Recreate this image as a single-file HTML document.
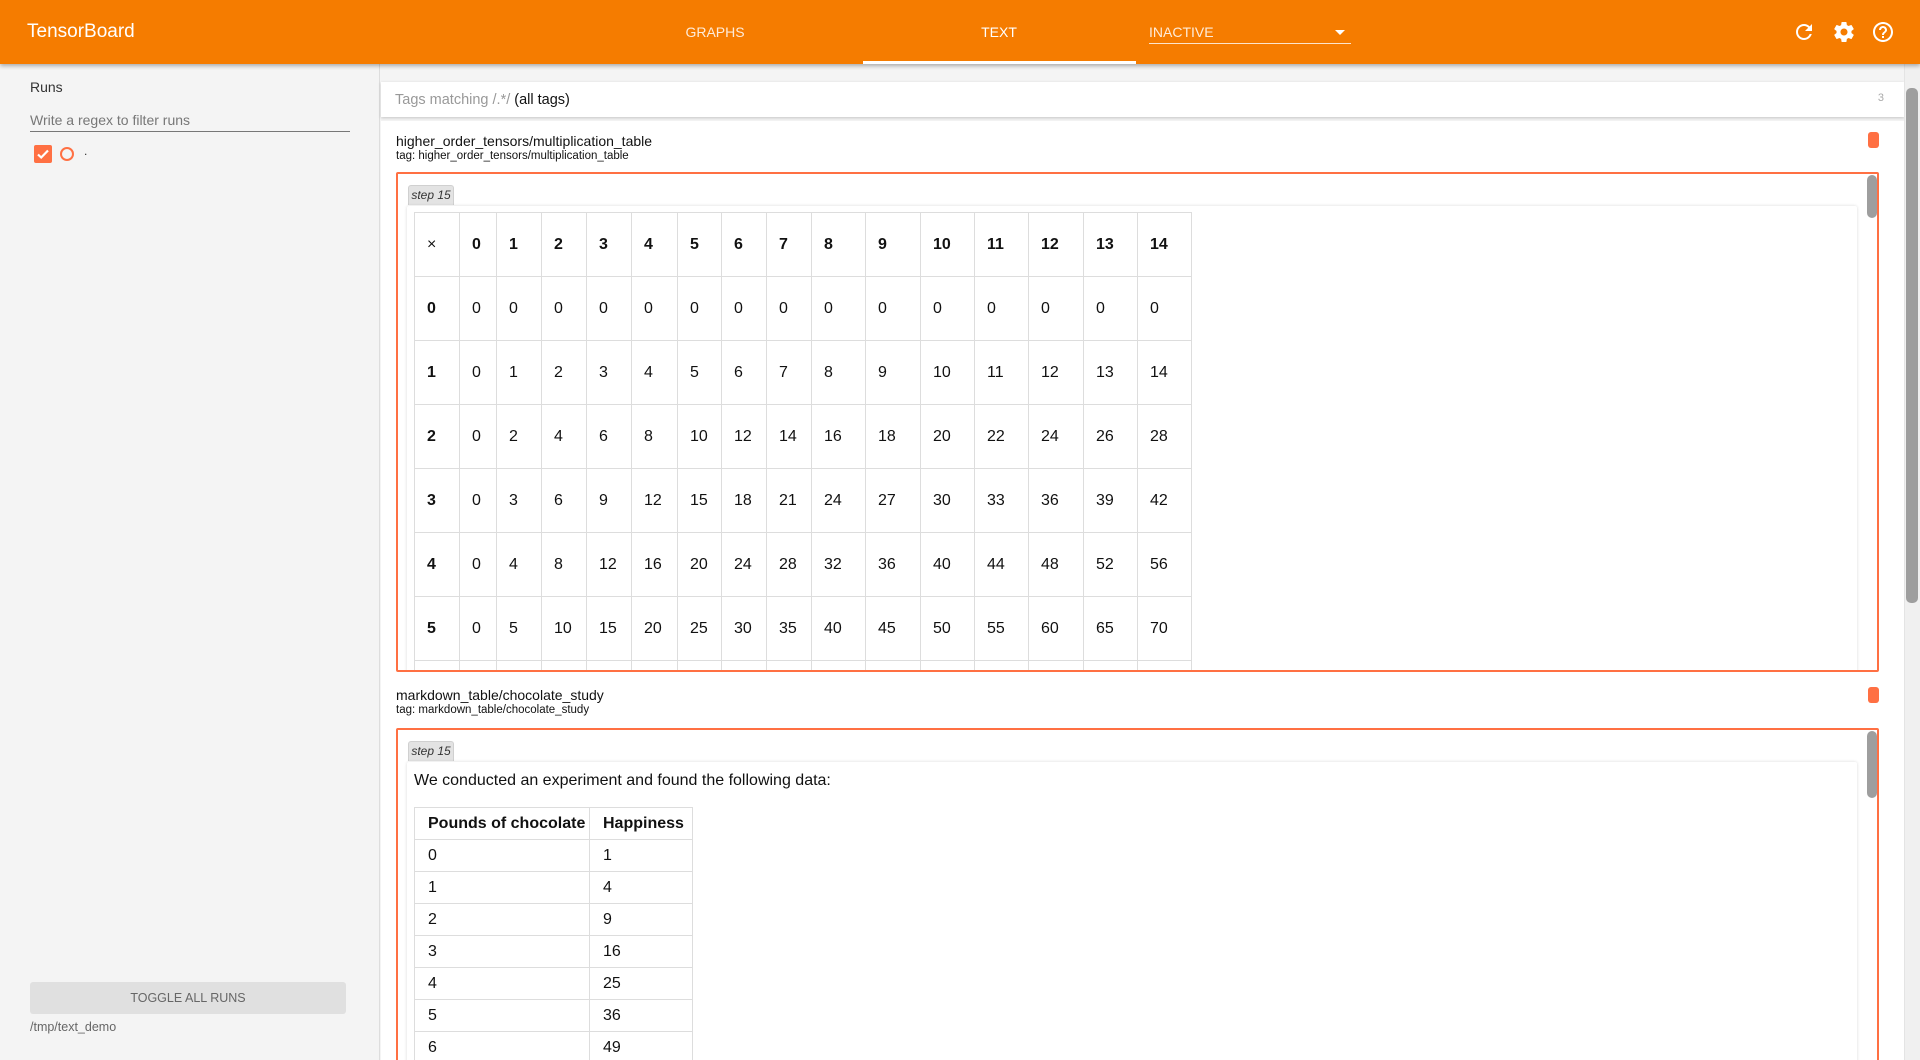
<!DOCTYPE html>
<html style="overflow:hidden;height:1060px"><head><meta charset="utf-8">
<style>
*{box-sizing:border-box;margin:0;padding:0}
html,body{width:1920px;height:1060px;overflow:hidden}
body{background:#f4f4f4;font-family:"Liberation Sans",Arial,sans-serif;color:#212121}
#wrap{position:relative;width:1920px;height:1060px;overflow:hidden}
.abs{position:absolute}
#hdr{left:0;top:0;width:1920px;height:64px;background:#f57c00;box-shadow:0 2px 4px rgba(0,0,0,.3);z-index:5;color:#fff}
#hdr .t{position:absolute;top:32px;transform:translateY(-50%);white-space:nowrap}
.tab{font-size:14px;color:rgba(255,255,255,.85);transform:translate(-50%,-50%)!important}
#side{left:0;top:64px;width:380px;height:996px;background:#f4f4f4;border-right:1px solid #ddd}
.card{background:#fff}
.box{border:2px solid #ff7043;border-radius:2px;overflow:hidden}
.chip{background:#e3e3e3;border:1px solid #d0d0d0;border-bottom:none;border-radius:3px 3px 0 0;font-style:italic;font-size:12px;color:#333;text-align:center;line-height:18px}
.inner{background:#fff;box-shadow:0 0 3px rgba(0,0,0,.15);border-radius:2px;overflow:hidden}
table{border-collapse:collapse;table-layout:fixed}
td,th{border:1px solid #ddd;text-align:left;font-size:16px;color:#111}
#mt td{height:64px;padding:0 0 0 12px}
#mt tr:first-child td,#mt td:first-child{font-weight:bold}
#ct td{height:32px;padding:0 0 0 13px}
#ct tr:first-child td{font-weight:bold}
.ob{background:#ff7043;border-radius:3px;width:11px;height:16px}
.sb{background:#9e9e9e;border-radius:5px}
</style></head><body>
<div id="wrap">
<div id="hdr" class="abs">
  <div class="t" style="left:27px;font-size:19px">TensorBoard</div>
  <div class="t tab" style="left:715px">GRAPHS</div>
  <div class="t tab" style="left:999px;color:#fff">TEXT</div>
  <div class="abs" style="left:863px;top:61px;width:273px;height:3px;background:#fff"></div>
  <div class="t" style="left:1149px;font-size:14px;color:rgba(255,255,255,.85)">INACTIVE</div>
  <div class="abs" style="left:1335px;top:30px;width:0;height:0;border-left:5px solid transparent;border-right:5px solid transparent;border-top:5px solid #fff"></div>
  <div class="abs" style="left:1149px;top:43px;width:202px;height:1px;background:rgba(255,255,255,.8)"></div>
  <svg class="abs" style="left:1792px;top:20px" width="24" height="24" viewBox="0 0 24 24"><path fill="#fff" d="M17.65 6.35C16.2 4.9 14.21 4 12 4c-4.420 0-7.99 3.58-7.99 8s3.57 8 7.99 8c3.73 0 6.84-2.55 7.73-6h-2.08c-.82 2.33-3.04 4-5.65 4-3.31 0-6-2.69-6-6s2.69-6 6-6c1.66 0 3.14.69 4.22 1.78L13 11h7V4l-2.35 2.35z"/></svg>
  <svg class="abs" style="left:1832px;top:20px" width="24" height="24" viewBox="0 0 24 24"><path fill="#fff" d="M19.43 12.98c.04-.32.07-.64.07-.98s-.03-.66-.07-.98l2.11-1.65c.19-.15.24-.42.12-.64l-2-3.46c-.12-.22-.39-.3-.61-.22l-2.49 1c-.52-.4-1.08-.73-1.69-.98l-.38-2.65C14.46 2.18 14.25 2 14 2h-4c-.25 0-.46.18-.49.42l-.38 2.65c-.61.25-1.17.59-1.69.98l-2.49-1c-.23-.09-.49 0-.61.22l-2 3.46c-.13.22-.07.49.12.64l2.11 1.65c-.04.32-.07.65-.07.98s.03.66.07.98l-2.11 1.65c-.19.15-.24.42-.12.64l2 3.46c.12.22.39.3.61.22l2.49-1c.52.4 1.08.73 1.69.98l.38 2.65c.03.24.24.42.49.42h4c.25 0 .46-.18.49-.42l.38-2.65c.61-.25 1.17-.59 1.69-.98l2.49 1c.23.09.49 0 .61-.22l2-3.46c.12-.22.07-.49-.12-.64l-2.11-1.65zM12 15.5c-1.93 0-3.5-1.57-3.5-3.5s1.57-3.5 3.5-3.5 3.5 1.57 3.5 3.5-1.57 3.5-3.5 3.5z"/></svg>
  <svg class="abs" style="left:1871px;top:20px" width="24" height="24" viewBox="0 0 24 24"><path fill="#fff" d="M11 18h2v-2h-2v2zm1-16C6.48 2 2 6.48 2 12s4.48 10 10 10 10-4.48 10-10S17.52 2 12 2zm0 18c-4.41 0-8-3.59-8-8s3.59-8 8-8 8 3.59 8 8-3.59 8-8 8zm0-14c-2.21 0-4 1.79-4 4h2c0-1.1.9-2 2-2s2 .9 2 2c0 2-3 1.75-3 5h2c0-2.25 3-2.5 3-5 0-2.21-1.79-4-4-4z"/></svg>
</div>

<div id="side" class="abs">
  <div class="abs" style="left:30px;top:15px;font-size:14px;color:#333">Runs</div>
  <div class="abs" style="left:30px;top:48px;font-size:14px;color:#777">Write a regex to filter runs</div>
  <div class="abs" style="left:30px;top:67px;width:320px;height:1px;background:#777"></div>
  <div class="abs" style="left:34px;top:81px;width:18px;height:18px;background:#ff7043;border-radius:2px"></div>
  <svg class="abs" style="left:34px;top:81px" width="18" height="18" viewBox="0 0 18 18"><path d="M4 9.5l3.2 3L14 5.5" stroke="#fff" stroke-width="2.2" fill="none"/></svg>
  <div class="abs" style="left:60px;top:83px;width:14px;height:14px;border:2px solid #ff7043;border-radius:50%"></div>
  <div class="abs" style="left:84px;top:80px;font-size:12px;color:#333">.</div>
  <div class="abs" style="left:30px;top:918px;width:316px;height:32px;background:#e0e0e0;border-radius:3px;font-size:12.5px;color:#666;text-align:center;line-height:32px">TOGGLE ALL RUNS</div>
  <div class="abs" style="left:30px;top:956px;font-size:12.5px;color:#666">/tmp/text_demo</div>
</div>

<div class="abs card" style="left:381px;top:82px;width:1523px;height:35px;box-shadow:0 1px 3px rgba(0,0,0,.2)">
  <div class="abs" style="left:14px;top:10px;font-size:14.5px;color:#999">Tags matching /.*/ <span style="color:#111">(all tags)</span></div>
  <div class="abs" style="right:20px;top:10px;font-size:11px;color:#aaa">3</div>
</div>

<div class="abs card" style="left:381px;top:121px;width:1523px;height:939px"></div>
<div class="abs" style="left:1904px;top:64px;width:16px;height:996px;background:#f0f0f0;border-left:1px solid #e4e4e4"></div>
<div class="abs sb" style="left:1906px;top:88px;width:12px;height:515px"></div>

<!-- card 1 -->
<div class="abs" style="left:396px;top:133px;font-size:14px;color:#111">higher_order_tensors/multiplication_table</div>
<div class="abs" style="left:396px;top:150px;font-size:11.5px;color:#111">tag: higher_order_tensors/multiplication_table</div>
<div class="abs ob" style="left:1868px;top:132px"></div>
<div class="abs box" style="left:396px;top:172px;width:1483px;height:500px">
  <div class="abs chip" style="left:10px;top:11px;width:46px;height:20px">step 15</div>
  <div class="abs inner" style="left:9px;top:32px;width:1450px;height:470px">
    <table id="mt" class="abs" style="left:7px;top:6px;width:777px">
      <colgroup><col style="width:45px"><col style="width:37px"><col style="width:45px"><col style="width:45px"><col style="width:45px"><col style="width:46px"><col style="width:44px"><col style="width:45px"><col style="width:45px"><col style="width:54px"><col style="width:55px"><col style="width:54px"><col style="width:54px"><col style="width:55px"><col style="width:54px"><col style="width:54px"></colgroup>
      <tr><td style="font-weight:normal">×</td><td>0</td><td>1</td><td>2</td><td>3</td><td>4</td><td>5</td><td>6</td><td>7</td><td>8</td><td>9</td><td>10</td><td>11</td><td>12</td><td>13</td><td>14</td></tr>
      <tr><td>0</td><td>0</td><td>0</td><td>0</td><td>0</td><td>0</td><td>0</td><td>0</td><td>0</td><td>0</td><td>0</td><td>0</td><td>0</td><td>0</td><td>0</td><td>0</td></tr>
      <tr><td>1</td><td>0</td><td>1</td><td>2</td><td>3</td><td>4</td><td>5</td><td>6</td><td>7</td><td>8</td><td>9</td><td>10</td><td>11</td><td>12</td><td>13</td><td>14</td></tr>
      <tr><td>2</td><td>0</td><td>2</td><td>4</td><td>6</td><td>8</td><td>10</td><td>12</td><td>14</td><td>16</td><td>18</td><td>20</td><td>22</td><td>24</td><td>26</td><td>28</td></tr>
      <tr><td>3</td><td>0</td><td>3</td><td>6</td><td>9</td><td>12</td><td>15</td><td>18</td><td>21</td><td>24</td><td>27</td><td>30</td><td>33</td><td>36</td><td>39</td><td>42</td></tr>
      <tr><td>4</td><td>0</td><td>4</td><td>8</td><td>12</td><td>16</td><td>20</td><td>24</td><td>28</td><td>32</td><td>36</td><td>40</td><td>44</td><td>48</td><td>52</td><td>56</td></tr>
      <tr><td>5</td><td>0</td><td>5</td><td>10</td><td>15</td><td>20</td><td>25</td><td>30</td><td>35</td><td>40</td><td>45</td><td>50</td><td>55</td><td>60</td><td>65</td><td>70</td></tr>
      <tr><td>6</td><td>0</td><td>6</td><td>12</td><td>18</td><td>24</td><td>30</td><td>36</td><td>42</td><td>48</td><td>54</td><td>60</td><td>66</td><td>72</td><td>78</td><td>84</td></tr>
    </table>
  </div>
  <div class="abs sb" style="left:1469px;top:1px;width:10px;height:43px"></div>
</div>

<!-- card 2 -->
<div class="abs" style="left:396px;top:687px;font-size:14px;color:#111">markdown_table/chocolate_study</div>
<div class="abs" style="left:396px;top:704px;font-size:11.5px;color:#111">tag: markdown_table/chocolate_study</div>
<div class="abs ob" style="left:1868px;top:687px"></div>
<div class="abs box" style="left:396px;top:728px;width:1483px;height:340px">
  <div class="abs chip" style="left:10px;top:11px;width:46px;height:20px">step 15</div>
  <div class="abs inner" style="left:9px;top:32px;width:1450px;height:310px">
    <div class="abs" style="left:7px;top:10px;font-size:16px;color:#111">We conducted an experiment and found the following data:</div>
    <table id="ct" class="abs" style="left:7px;top:45px;width:278px">
      <colgroup><col style="width:175px"><col style="width:103px"></colgroup>
      <tr><td>Pounds of chocolate</td><td>Happiness</td></tr>
      <tr><td>0</td><td>1</td></tr>
      <tr><td>1</td><td>4</td></tr>
      <tr><td>2</td><td>9</td></tr>
      <tr><td>3</td><td>16</td></tr>
      <tr><td>4</td><td>25</td></tr>
      <tr><td>5</td><td>36</td></tr>
      <tr><td>6</td><td>49</td></tr>
      <tr><td>7</td><td>64</td></tr>
    </table>
  </div>
  <div class="abs sb" style="left:1469px;top:1px;width:10px;height:67px"></div>
</div>
</div>
</body></html>
